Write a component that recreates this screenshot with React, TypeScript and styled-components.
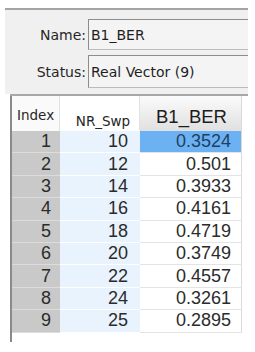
import { FC } from "react";
import styled, { createGlobalStyle } from "styled-components";

const Global = createGlobalStyle`
  html, body {
    margin: 0;
    background: #ffffff;
  }
`;

const Page = styled.div`
  width: 255px;
  height: 352px;
  padding: 8px 7px 0 5px;
  box-sizing: border-box;
  font-family: "DejaVu Sans", "Liberation Sans", sans-serif;
`;

const Props = styled.div`
  border-top: 2px solid #a4a4a4;
  background: #f0f0f0;
  height: 86px;
  padding-top: 9px;
  box-sizing: border-box;
  display: flex;
  flex-direction: column;
  gap: 5px;
`;

const Field = styled.div<{ tall?: boolean }>`
  display: flex;
  align-items: stretch;
  height: ${({ tall }) => (tall ? "33px" : "31px")};
`;

const Label = styled.div`
  width: 81px;
  padding-right: 2px;
  display: flex;
  align-items: center;
  justify-content: flex-end;
  font-size: 14px;
  color: #262626;
`;

const Input = styled.div`
  flex: 1;
  display: flex;
  align-items: center;
  padding-left: 2px;
  background: #f4f4f4;
  border: 1px solid #bcbcbc;
  border-top-color: #8c8c8c;
  border-left-color: #8c8c8c;
  border-right: none;
  font-size: 14px;
  color: #1e1e1e;
`;

const Sheet = styled.div`
  margin-left: 5px;
  border-top: 2px solid #a8a8a8;
  height: 248px;
  display: flex;
`;

const Edge = styled.div`
  width: 2px;
  height: 246px;
  background: #8a8a8a;
`;

const Table = styled.div`
  display: grid;
  grid-template-columns: 48px 80px 102px;
  grid-template-rows: 35px repeat(9, 22.4px);
  align-self: flex-start;
  font-family: "Liberation Sans", Arial, sans-serif;
  color: #2b2b2b;
`;

const Head = styled.div<{ kind: "index" | "plain" | "shade" }>`
  display: flex;
  align-items: ${({ kind }) => (kind === "index" ? "center" : "flex-end")};
  justify-content: ${({ kind }) => (kind === "index" ? "flex-start" : "center")};
  padding: ${({ kind }) =>
    kind === "index" ? "2px 0 0 5px" : kind === "plain" ? "0 0 2px 7px" : "0 0 3px 2px"};
  font-family: ${({ kind }) =>
    kind === "shade"
      ? `"Liberation Sans", Arial, sans-serif`
      : `"DejaVu Sans", sans-serif`};
  font-size: ${({ kind }) => (kind === "shade" ? "18.5px" : "13.5px")};
  color: ${({ kind }) => (kind === "shade" ? "#1c1c1c" : "#262626")};
  background: ${({ kind }) =>
    kind === "shade"
      ? "linear-gradient(#fbfbfb, #e0e0e0)"
      : kind === "index"
      ? "#fafafa"
      : "#ffffff"};
  border-right: 1px solid ${({ kind }) => (kind === "shade" ? "#d8d8d8" : "#e2e2e2")};
  box-sizing: border-box;
`;

const Cell = styled.div<{ col: "index" | "nr" | "ber"; selected?: boolean }>`
  display: flex;
  align-items: center;
  justify-content: flex-end;
  padding-right: ${({ col }) => (col === "index" ? "9px" : col === "nr" ? "12px" : "10px")};
  font-size: 18px;
  box-sizing: border-box;
  color: ${({ selected }) => (selected ? "#1f3f63" : "#2b2b2b")};
  background: ${({ col, selected }) =>
    selected ? "#6cb2f2" : col === "index" ? "#c9c9c9" : col === "nr" ? "#e9f3fd" : "#ffffff"};
  border-bottom: 1px solid
    ${({ col }) => (col === "index" ? "#dcdcdc" : col === "nr" ? "#ffffff" : "#e4e4e4")};
  border-right: ${({ col }) => (col === "ber" ? "1px solid #dadada" : "none")};
`;

const rows: [number, number, string][] = [
  [1, 10, "0.3524"],
  [2, 12, "0.501"],
  [3, 14, "0.3933"],
  [4, 16, "0.4161"],
  [5, 18, "0.4719"],
  [6, 20, "0.3749"],
  [7, 22, "0.4557"],
  [8, 24, "0.3261"],
  [9, 25, "0.2895"],
];

const App: FC = () => (
  <Page>
    <Global />
    <Props>
      <Field>
        <Label>Name:</Label>
        <Input>B1_BER</Input>
      </Field>
      <Field tall>
        <Label>Status:</Label>
        <Input>Real Vector (9)</Input>
      </Field>
    </Props>
    <Sheet>
      <Edge />
      <Table>
        <Head kind="index">Index</Head>
        <Head kind="plain">NR_Swp</Head>
        <Head kind="shade">B1_BER</Head>
        {rows.map(([index, nr, ber]) => [
          <Cell key={`i${index}`} col="index">
            {index}
          </Cell>,
          <Cell key={`n${index}`} col="nr">
            {nr}
          </Cell>,
          <Cell key={`b${index}`} col="ber" selected={index === 1}>
            {ber}
          </Cell>,
        ])}
      </Table>
    </Sheet>
  </Page>
);

export default App;
